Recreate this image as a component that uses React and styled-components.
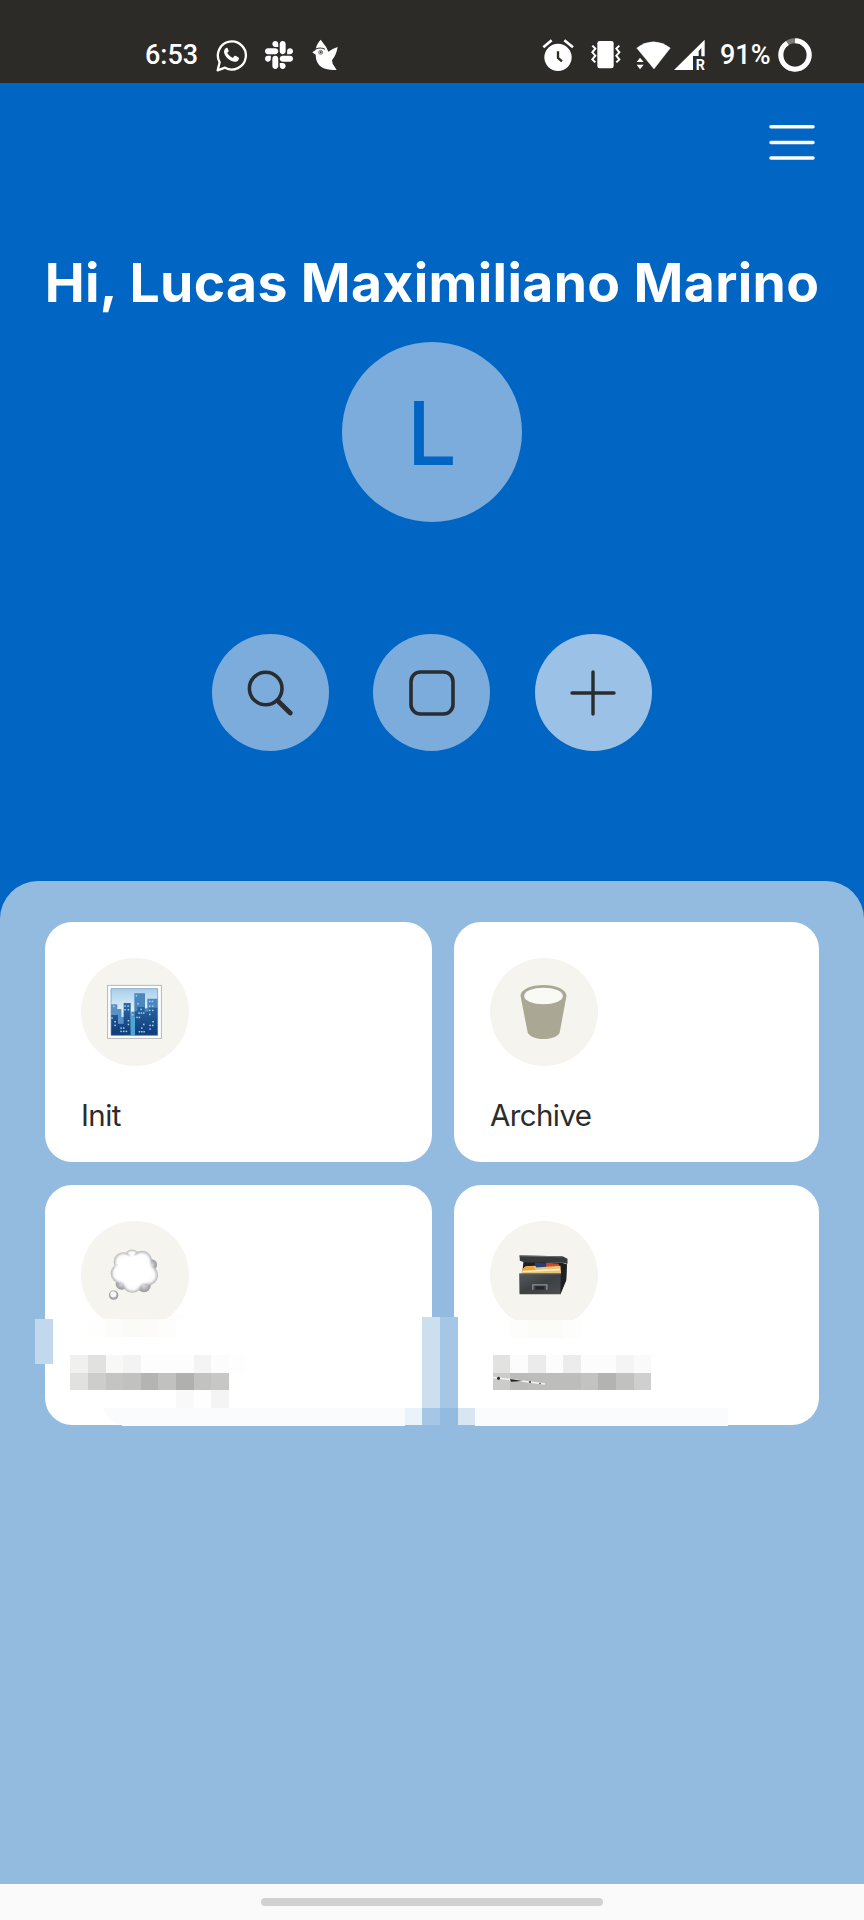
import styled, { createGlobalStyle } from 'styled-components';
import { FaSlack } from 'react-icons/fa';

const GlobalStyle = createGlobalStyle`
  * {
    box-sizing: border-box;
  }

  body {
    margin: 0;
    background: #0065c3;
  }
`;

const Screen = styled.div`
  width: 864px;
  height: 1920px;
  display: flex;
  flex-direction: column;
  overflow: hidden;
  background: #0065c3;
  font-family: Inter, sans-serif;
`;

const StatusBar = styled.header`
  height: 83px;
  flex-shrink: 0;
  padding: 27px 52px 0 145px;
  display: flex;
  align-items: center;
  justify-content: space-between;
  background: #2d2b28;
  color: #fff;
`;

const StatusGroup = styled.div`
  display: flex;
  align-items: center;
  gap: ${(props) => props.$gap}px;

  svg {
    display: block;
    flex-shrink: 0;
  }
`;

const StatusText = styled.span`
  font-family: Roboto, sans-serif;
  font-size: 27px;
  font-weight: 500;
  line-height: 32px;
  width: ${(props) => props.$width}px;
  white-space: nowrap;
`;

const Hero = styled.section`
  height: 798px;
  flex-shrink: 0;
  padding-top: 41px;
  display: flex;
  flex-direction: column;
  align-items: center;
`;

const MenuButton = styled.button`
  align-self: flex-end;
  margin-right: 49px;
  width: 46px;
  height: 37px;
  padding: 0;
  border: none;
  background: none;
  cursor: pointer;

  svg {
    display: block;
  }
`;

const Greeting = styled.h1`
  margin: 90px 0 0;
  font-size: 53.5px;
  line-height: 64px;
  font-weight: 700;
  letter-spacing: 0.35px;
  white-space: nowrap;
  color: #fff;
`;

const Avatar = styled.div`
  width: 180px;
  height: 180px;
  margin-top: 27px;
  border-radius: 50%;
  display: flex;
  align-items: center;
  justify-content: center;
  background: #7cacdc;
  color: #0065c3;
  font-size: 88px;
  font-weight: 450;
  line-height: 178px;
  padding-top: 1px;
`;

const Actions = styled.div`
  display: flex;
  gap: 44.5px;
  margin-top: 112px;
  margin-right: 0.5px;
`;

const ActionButton = styled.button`
  width: 117px;
  height: 117px;
  padding: 0;
  border: none;
  border-radius: 50%;
  display: flex;
  align-items: center;
  justify-content: center;
  background: ${(props) => (props.$light ? '#9cc1e6' : '#7cacdc')};
  cursor: pointer;
`;

const Panel = styled.main`
  position: relative;
  height: 1003px;
  flex-shrink: 0;
  padding: 41px 45px 0;
  border-radius: 38px 38px 0 0;
  background: #92bbdf;
`;

const Grid = styled.div`
  display: grid;
  grid-template-columns: 387px 365px;
  grid-auto-rows: 240px;
  gap: 22.5px 22px;
`;

const Card = styled.article`
  padding: 36px;
  border-radius: 27px;
  background: #fff;
`;

const IconCircle = styled.div`
  width: 108px;
  height: 108px;
  border-radius: 50%;
  display: flex;
  align-items: center;
  justify-content: center;
  background: #f5f4ef;
`;

const CardLabel = styled.div`
  margin-top: 31px;
  font-size: 29.5px;
  line-height: 36px;
  letter-spacing: -0.6px;
  color: #2c2c2c;
`;

// censored labels, lies over the bottom of the second row
const Mosaic = styled.svg`
  position: absolute;
  top: 419px;
  left: 0;
`;

const NavBar = styled.footer`
  height: 36px;
  flex-shrink: 0;
  display: flex;
  justify-content: center;
  align-items: center;
  background: #fafafa;
`;

const HomeHandle = styled.div`
  width: 342px;
  height: 8px;
  border-radius: 4px;
  background: #d1d1d1;
`;

const WhatsappIcon = () => (
  <svg width="32" height="33" viewBox="258 57 96 99">
    <path
      d="M263 151 L269 127 A42 42 0 1 1 285 143 Z"
      fill="none"
      stroke="#fff"
      strokeWidth="7"
      strokeLinejoin="round"
    />
    <path
      d="M291 83c-4 0-9 6-9 12 0 8 7 17 14 23 7 5 15 9 22 7 6-1 9-6 9-11 0-2-10-7-12-7-3 0-4 6-7 6-4 0-15-10-16-14 0-3 5-4 4-7l-4-9z"
      fill="#fff"
    />
  </svg>
);

const BirdIcon = () => (
  <svg width="26" height="33" viewBox="551 57 78 99">
    <path
      d="M577 59L594 82 600 95Q612 86 628 81 624 105 611 121L613 131 625 150Q598 152 580 142 562 129 562 104L552 97 562 90Q564 72 577 59Z"
      fill="#fff"
    />
    <path d="M563 87c7-4 19-4 27 1" fill="none" stroke="#2d2b28" strokeWidth="3" />
    <circle cx="577" cy="97" r="6" fill="none" stroke="#2d2b28" strokeWidth="2" />
    <circle cx="577" cy="97" r="3" fill="#2d2b28" />
  </svg>
);

const AlarmIcon = () => (
  <svg width="32" height="33" viewBox="37 57 96 99">
    <circle cx="85" cy="112" r="41" fill="#fff" />
    <path d="M41 82L66 61M104 61L130 82" stroke="#fff" strokeWidth="8" />
    <path d="M85 94v20l12 10" fill="none" stroke="#2d2b28" strokeWidth="7" />
  </svg>
);

const VibrateIcon = () => (
  <svg width="30" height="30" viewBox="185 63 90 90">
    <rect x="204" y="66" width="49" height="82" rx="7" fill="#fff" />
    <path
      d="M189 80l9 9-9 11 9 10-9 11 9 9M270 80l-9 9 9 11-9 10 9 11-9 9"
      fill="none"
      stroke="#fff"
      strokeWidth="6"
    />
  </svg>
);

const WifiIcon = () => (
  <svg width="35" height="33" viewBox="316 57 105 99">
    <path d="M318 84Q368 46 419 84L370 147Z" fill="#fff" stroke="#fff" strokeLinejoin="round" />
    <path d="M318 126l10-13 11 13zM318 134h21l-11 14z" fill="#fff" />
  </svg>
);

const SignalIcon = () => (
  <svg width="31" height="33" viewBox="430 57 93 99">
    <path d="M430 150L522 59v50h-10V84l-8 9v15h-17v42z" fill="#fff" />
    <text
      x="495"
      y="150"
      fill="#fff"
      fontFamily="Roboto, sans-serif"
      fontSize="43"
      fontWeight="700"
    >
      R
    </text>
  </svg>
);

const BatteryIcon = () => (
  <svg width="34" height="34" viewBox="0 0 34 34">
    <circle cx="17" cy="17" r="14.2" fill="none" stroke="#7b7a77" strokeWidth="5" />
    <circle
      cx="17"
      cy="17"
      r="14.2"
      fill="none"
      stroke="#fff"
      strokeWidth="5"
      pathLength="100"
      strokeDasharray="91 9"
      transform="rotate(-90 17 17)"
    />
  </svg>
);

const MenuIcon = () => (
  <svg width="46" height="37" viewBox="0 0 46 37">
    <path
      d="M2 2.7h42M2 18.4h42M2 34h42"
      stroke="#fff"
      strokeWidth="3.5"
      strokeLinecap="round"
    />
  </svg>
);

const SearchIcon = () => (
  <svg width="46" height="46" viewBox="0 0 46 46" fill="none" stroke="#292d30">
    <circle cx="18.7" cy="18.5" r="16.3" strokeWidth="3.6" />
    <path d="M31 31L43.2 43" strokeWidth="4.8" strokeLinecap="round" />
  </svg>
);

const SquareIcon = () => (
  <svg width="46" height="46" viewBox="0 0 46 46">
    <rect x="2" y="2" width="42" height="42" rx="9.5" fill="none" stroke="#292d30" strokeWidth="3.6" />
  </svg>
);

const PlusIcon = () => (
  <svg width="46" height="46" viewBox="0 0 46 46">
    <path d="M23 2v42M2 23h42" stroke="#292d30" strokeWidth="3.4" strokeLinecap="round" />
  </svg>
);

const CITY_WINDOWS = [
  [319, 257], [324, 281], [359, 274], [367, 274], [359, 288], [368, 288],
  [359, 301], [368, 301], [359, 313], [285, 288], [294, 288], [285, 299],
  [295, 299], [251, 289], [246, 324], [255, 335], [255, 346], [295, 332],
  [295, 343], [273, 354], [281, 354], [273, 364], [281, 364], [289, 364],
  [321, 322], [328, 322], [327, 309], [334, 309], [341, 309], [333, 298],
  [341, 343], [335, 354], [328, 365], [335, 365], [342, 365], [369, 335],
  [360, 346], [368, 346], [360, 357], [308, 314],
];

const CityEmoji = () => (
  <svg width="60" height="60" viewBox="225 216 180 180">
    <defs>
      <linearGradient id="sky" x1="0" y1="0" x2="0" y2="1">
        <stop offset="0" stopColor="#a9cfec" />
        <stop offset="0.45" stopColor="#dceff8" />
        <stop offset="1" stopColor="#62c6ed" />
      </linearGradient>
      <linearGradient id="tower" x1="0" y1="0" x2="0" y2="1">
        <stop offset="0" stopColor="#2d69a5" />
        <stop offset="1" stopColor="#0d3b78" />
      </linearGradient>
    </defs>
    <rect x="233" y="226" width="161" height="159" fill="#fdfeff" stroke="#a9aaa9" strokeWidth="2.5" />
    <rect x="243" y="236" width="140" height="140" fill="url(#sky)" />
    <path d="M243 283h19v14h12v24h8v55h-39z" fill="#5b90c4" />
    <path d="M313 250h32v45h7v-29h31v110h-79v-71h9z" fill="#4b86be" />
    <path
      d="M243 315h21v26h17v-62h21v97h-59zM315 304h7v-13h22v14h12v-12h27v83h-68z"
      fill="url(#tower)"
    />
    <path d="M303 320h12v56h-12z" fill="#4ba6d8" />
    <path d="M243 236h140v140H243z" fill="none" stroke="#6a91b6" strokeWidth="2" />
    {CITY_WINDOWS.map(([x, y]) => (
      <rect key={`${x}-${y}`} x={x - 2} y={y - 2} width="4.5" height="4.5" fill="#a6d2ee" />
    ))}
  </svg>
);

const BucketIcon = () => (
  <svg width="60" height="60" viewBox="223.5 216 180 180">
    <path
      d="M243 257c0-18 31-32 69-32s69 14 69 32l-20 108c-1 12-23 22-49 22s-46-10-48-22z"
      fill="#aaa895"
    />
    <ellipse cx="312" cy="258" rx="58" ry="25" fill="#f9f9f6" />
  </svg>
);

const CloudEmoji = () => (
  <svg width="60" height="60" viewBox="225 133.5 180 180">
    <defs>
      <radialGradient id="puff">
        <stop offset="0" stopColor="#fff" />
        <stop offset="0.65" stopColor="#fafafb" />
        <stop offset="1" stopColor="#b4b5b8" />
      </radialGradient>
      <radialGradient id="shade">
        <stop offset="0" stopColor="#dadbdd" />
        <stop offset="1" stopColor="#96979b" />
      </radialGradient>
      <radialGradient id="core">
        <stop offset="0.8" stopColor="#fff" />
        <stop offset="1" stopColor="#fff" stopOpacity="0" />
      </radialGradient>
    </defs>
    <circle cx="364" cy="193" r="17" fill="url(#shade)" />
    <circle cx="275" cy="250" r="18" fill="url(#shade)" />
    <circle cx="342" cy="255" r="20" fill="url(#shade)" />
    <circle cx="306" cy="168" r="21" fill="url(#puff)" />
    <circle cx="280" cy="184" r="29" fill="url(#puff)" />
    <circle cx="336" cy="181" r="30" fill="url(#puff)" />
    <circle cx="272" cy="219" r="30" fill="url(#puff)" />
    <circle cx="353" cy="224" r="31" fill="url(#puff)" />
    <circle cx="307" cy="247" r="30" fill="url(#puff)" />
    <ellipse cx="311" cy="210" rx="62" ry="52" fill="url(#core)" />
    <circle cx="251" cy="284" r="14" fill="url(#shade)" />
    <circle cx="250" cy="281" r="9" fill="#f8f8f8" />
  </svg>
);

const FileBoxEmoji = () => (
  <svg width="60" height="60" viewBox="403.5 193.5 180 180">
    <defs>
      <linearGradient id="box" x1="0" y1="0" x2="1" y2="1">
        <stop offset="0" stopColor="#56595d" />
        <stop offset="0.5" stopColor="#3d4043" />
        <stop offset="1" stopColor="#4c4f52" />
      </linearGradient>
    </defs>
    <path d="M432 242l116 5 14 5-2 46-17 40-115-58z" fill="#1d1e20" />
    <path d="M466 247l40 2v20h-40z" fill="#283d7a" />
    <path d="M500 247l38 3v20h-38z" fill="#c94b2d" />
    <path d="M425 280l6-16 8-7 28-1 4 5 72-5 2 24z" fill="#e8c47a" />
    <path d="M426 273l10-14 26-2 6 12z" fill="#f5a13a" />
    <path d="M429 273l112-6" stroke="#fff0bd" strokeWidth="4" />
    <path d="M420 225l129 2 15 8v15l-15-3-113-1-15-5z" fill="#37393c" />
    <path d="M420 226l129 3" stroke="#6c6f72" strokeWidth="3" />
    <path d="M419 279h125v62H420z" fill="url(#box)" />
    <path d="M544 279l18-32-2 53-17 41z" fill="#1f2022" />
    <path d="M420 280h124" stroke="#73767a" strokeWidth="2" />
    <path d="M460 328v-15h42v15" fill="none" stroke="#8d9095" strokeWidth="4" />
    <rect x="468" y="317" width="27" height="10" fill="#242628" />
  </svg>
);

const CELL = 17.6;

// each row: x, y and the greys of its cells from left to right
const MOSAIC_ROWS = [
  { x: 88, y: 1319, cells: ['#fefefc', '#fcfcfa', '#fafaf7', '#fcfbf9', '#fdfdfc'] },
  { x: 70.3, y: 1355, cells: ['#f0f0ef', '#e1e1df', '#f8f8f7', '#f3f3f3', '#fdfdfd', '#fdfdfd', '#fdfdfd', '#f4f4f4', '#fcfcfc', '#fefefe'] },
  { x: 70.3, y: 1372.6, cells: ['#e1e1e0', '#cdcdcc', '#c4c4c3', '#c1c1c0', '#b4b4b3', '#c1c1c0', '#b0b0af', '#c2c2c0', '#c7c7c6'] },
  { x: 175.9, y: 1390.2, cells: ['#f9f9f9', '#fefefe', '#f4f4f4'] },
  { x: 510.3, y: 1320, cells: ['#fdfdfb', '#fbfbf8', '#fbfbf8', '#fdfdfc'] },
  { x: 492.8, y: 1355, cells: ['#e2e2e1', '#fcfcfc', '#ebebeb', '#fcfcfc', '#ececec', '#fcfcfc', '#fcfcfc', '#f4f4f4', '#fafafa'] },
  { x: 492.8, y: 1372.6, cells: ['#cbcbca', '#bbbbba', '#bdbdbc', '#bdbdbc', '#bdbdbc', '#c3c3c2', '#b3b3b2', '#c1c1c0', '#cfcfcf'] },
  { x: 404.8, y: 1407.8, cells: ['#eaf2fa', '#a5c6e4', '#92bbdf', '#d8e6f4'] },
];

const CensoredLabels = () => (
  <Mosaic width="864" height="140" viewBox="0 1300 864 140" shapeRendering="crispEdges">
    <rect x="81" y="1319" width="110" height="18" fill="#fff" />
    <rect x="172" y="1313.5" width="12" height="6" fill="#fdfdfc" />
    <path d="M490 1319.5l40 1 38 3.5h31v13H490z" fill="#fff" />
    <rect x="35" y="1319" width="17.7" height="45" fill="#c2d8ec" />
    <rect x="422.4" y="1317" width="17.6" height="91" fill="#cbdfee" />
    <rect x="440" y="1317" width="17.6" height="91" fill="#a5c6e4" />
    <path d="M104 1408h301v17.6H122q-14-3-18-17.6z" fill="#f9fbfd" />
    <rect x="475" y="1408" width="253" height="17.6" fill="#f9fbfd" />
    {MOSAIC_ROWS.map((row) =>
      row.cells.map((color, i) => (
        <rect
          key={`${row.x}-${row.y}-${i}`}
          x={row.x + i * CELL}
          y={row.y}
          width={CELL}
          height={CELL}
          fill={color}
        />
      ))
    )}
    <g shapeRendering="auto">
      <path d="M493 1377.5l17 2 35 4.5" fill="none" stroke="#f4f4f4" strokeWidth="1.5" />
      <path d="M510 1379l13 2-12 .8z" fill="#222" />
      <circle cx="498.5" cy="1378.3" r="1.5" fill="#222" />
      <circle cx="530" cy="1382" r="1" fill="#333" />
      <circle cx="540" cy="1383.5" r="0.8" fill="#444" />
    </g>
  </Mosaic>
);

const cards = [
  { id: 'init', label: 'Init', icon: <CityEmoji /> },
  { id: 'archive', label: 'Archive', icon: <BucketIcon /> },
  { id: 'thoughts', icon: <CloudEmoji /> },
  { id: 'files', icon: <FileBoxEmoji /> },
];

const App = () => {
  return (
    <>
      <GlobalStyle />
      <Screen>
        <StatusBar>
          <StatusGroup $gap={17}>
            <StatusText $width={54}>6:53</StatusText>
            <StatusGroup $gap={15}>
              <WhatsappIcon />
              <FaSlack size={32} />
            </StatusGroup>
            <BirdIcon />
          </StatusGroup>
          <StatusGroup $gap={15}>
            <StatusGroup $gap={17}>
              <AlarmIcon />
              <VibrateIcon />
            </StatusGroup>
            <StatusGroup $gap={3}>
              <WifiIcon />
              <SignalIcon />
            </StatusGroup>
            <StatusGroup $gap={9}>
              <StatusText $width={49}>91%</StatusText>
              <BatteryIcon />
            </StatusGroup>
          </StatusGroup>
        </StatusBar>
        <Hero>
          <MenuButton aria-label="Menu">
            <MenuIcon />
          </MenuButton>
          <Greeting>Hi, Lucas Maximiliano Marino</Greeting>
          <Avatar>L</Avatar>
          <Actions>
            <ActionButton aria-label="Search">
              <SearchIcon />
            </ActionButton>
            <ActionButton aria-label="Select">
              <SquareIcon />
            </ActionButton>
            <ActionButton $light aria-label="Add">
              <PlusIcon />
            </ActionButton>
          </Actions>
        </Hero>
        <Panel>
          <Grid>
            {cards.map((card) => (
              <Card key={card.id}>
                <IconCircle>{card.icon}</IconCircle>
                {card.label && <CardLabel>{card.label}</CardLabel>}
              </Card>
            ))}
          </Grid>
          <CensoredLabels />
        </Panel>
        <NavBar>
          <HomeHandle />
        </NavBar>
      </Screen>
    </>
  );
};

export default App;
